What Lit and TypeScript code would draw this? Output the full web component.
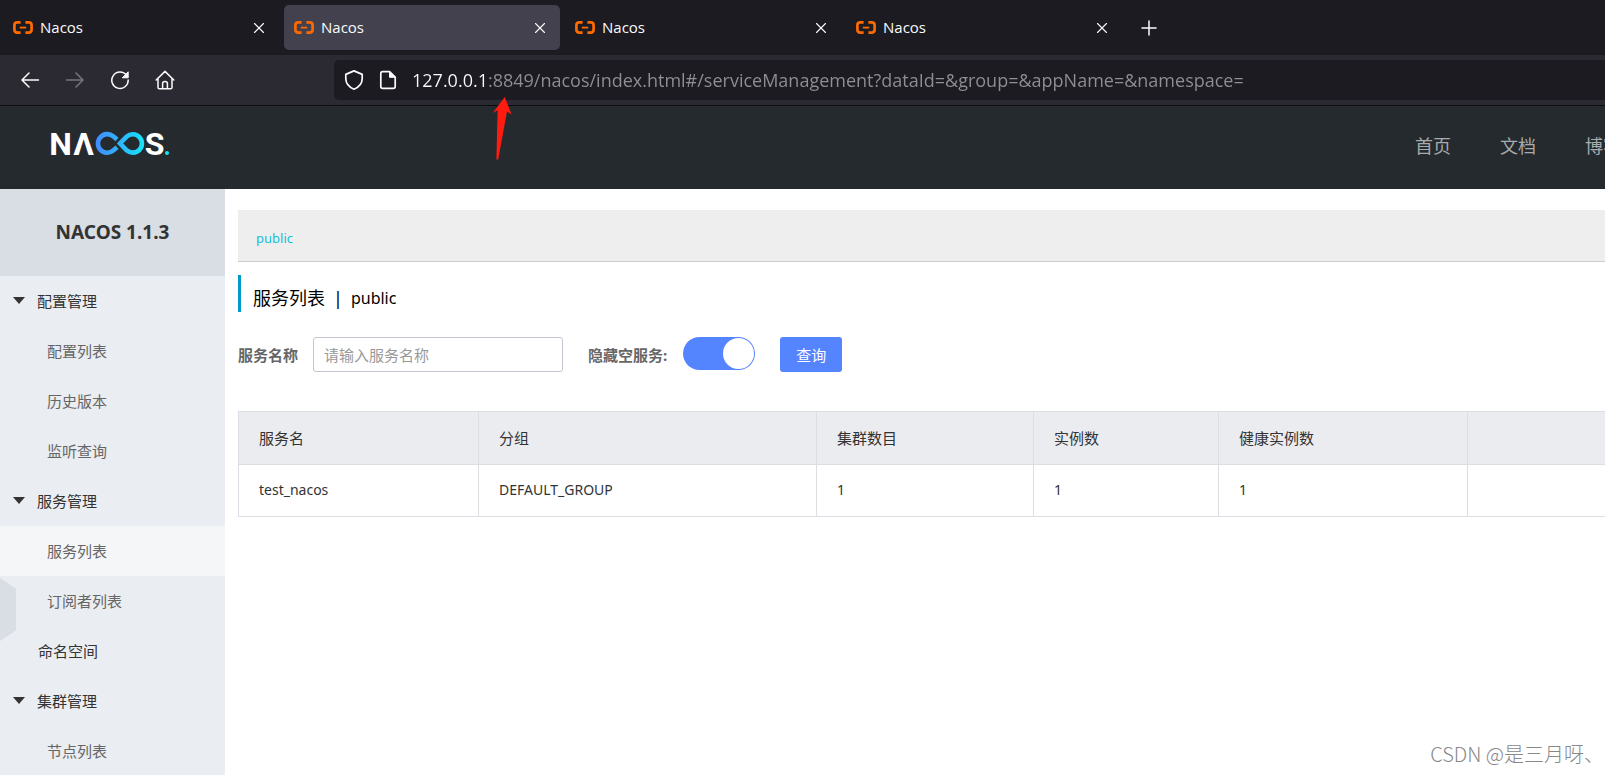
import { LitElement, html, css, svg } from "lit";
import { customElement, state } from "lit/decorators.js";

const favicon = html`<svg class="favicon" viewBox="0 0 20 13" width="20" height="13" aria-hidden="true">
  <g fill="none" stroke="#ff6a00" stroke-width="2.7">
    <path d="M7.6 1.4H4.4Q1.4 1.4 1.4 4.2V8.8Q1.4 11.6 4.4 11.6H7.6" />
    <path d="M12.4 1.4H15.6Q18.6 1.4 18.6 4.2V8.8Q18.6 11.6 15.6 11.6H12.4" />
    <path d="M6.8 6.6H13.2" stroke-width="1.8" />
  </g>
</svg>`;

const icon = (body: unknown, size = 20) => html`<svg
  class="icon" viewBox="0 0 20 20" width=${size} height=${size} aria-hidden="true"
  fill="none" stroke="currentColor" stroke-width="1.5" stroke-linecap="round" stroke-linejoin="round"
>${body}</svg>`;

const icons = {
  close: svg`<path d="M5.5 5.5l9 9M14.5 5.5l-9 9" stroke-width="1.1"/>`,
  plus: svg`<path d="M10 3v14M3 10h14"/>`,
  back: svg`<path d="M18.5 10H2M9 3L2 10l7 7"/>`,
  forward: svg`<path d="M1.5 10H18M11 3l7 7-7 7"/>`,
  reload: svg`<path d="M16.6 5.4A8.2 8.2 0 1 0 18.2 10"/><path d="M18.2 2.2v5.6h-5.6z" fill="currentColor" stroke-width="1"/>`,
  home: svg`<path d="M1.2 10L10 1.4 18.8 10M3 8.6V17.4Q3 18.8 4.4 18.8H15.6Q17 18.8 17 17.4V8.6M7.6 18.6V13.6Q7.6 11.6 10 11.6T12.4 13.6V18.6"/>`,
  shield: svg`<path d="M10 .9L18.2 4.4V8.5C18.2 13.2 15.2 17 10 19.2 4.8 17 1.8 13.2 1.8 8.5V4.4Z" stroke-width="1.7"/>`,
  page: svg`<path d="M11.5 1.6H4.6Q2.8 1.6 2.8 3.4V16.6Q2.8 18.4 4.6 18.4H15.4Q17.2 18.4 17.2 16.6V7.3Z" stroke-width="1.7"/><path d="M11.5 1.6V7.3H17.2Z" fill="currentColor" stroke-width="1"/>`,
};

@customElement("browser-chrome")
class BrowserChrome extends LitElement {
  static styles = css`
    :host { display: block; font-family: "Open Sans", "Noto Sans", sans-serif; color: #fbfbfe; border-bottom: 1px solid #0c0c0d; }
    button { border: 0; padding: 0; background: none; color: inherit; font: inherit; display: flex; align-items: center; }
    .tabs { display: flex; align-items: center; gap: 5px; height: 55px; padding: 0 3px; background: #1c1b22; }
    .tab { display: flex; align-items: center; flex: 0 1 276px; height: 45px; padding: 0 10px; border-radius: 5px; box-sizing: border-box; }
    .tab.current { background: #42414d; }
    .title { flex: 1; gap: 7px; font-size: 15px; line-height: 24px; }
    .title span { padding-bottom: 2px; }
    .new { margin-left: 12px; }
    .bar { display: flex; align-items: center; height: 50px; padding-left: 20px; background: #2b2a33; }
    .tools { display: flex; gap: 25px; width: 314px; flex: none; }
    .off { color: #76757d; }
    .address { flex: 1; display: flex; align-items: center; gap: 14px; height: 40px; padding-left: 10px; background: #1c1b22; border-radius: 5px 0 0 5px; }
    .url {
      flex: 1; min-width: 0; border: 0; outline: 0; padding: 0; font: 18px/36px "Open Sans", "Noto Sans", sans-serif;
      color: transparent; background: linear-gradient(90deg, #fbfbfe 75px, #8f8f96 75px); -webkit-background-clip: text; background-clip: text;
    }
  `;

  render() {
    return html`
      <div class="tabs">
        ${[0, 1, 2, 3].map(
          (i) => html`<div class="tab ${i === 1 ? "current" : ""}">
            <button class="title">${favicon}<span>Nacos</span></button>
            <button aria-label="Close tab">${icon(icons.close)}</button>
          </div>`,
        )}
        <button class="new" aria-label="New tab">${icon(icons.plus)}</button>
      </div>
      <div class="bar">
        <div class="tools">
          <button aria-label="Back">${icon(icons.back)}</button>
          <button class="off" aria-label="Forward">${icon(icons.forward)}</button>
          <button aria-label="Reload">${icon(icons.reload)}</button>
          <button aria-label="Home">${icon(icons.home)}</button>
        </div>
        <div class="address">
          ${icon(icons.shield)}${icon(icons.page)}
          <input class="url" aria-label="Address"
            value="127.0.0.1:8849/nacos/index.html#/serviceManagement?dataId=&amp;group=&amp;appName=&amp;namespace=" />
        </div>
      </div>
    `;
  }
}

@customElement("nacos-header")
class NacosHeader extends LitElement {
  static styles = css`
    :host { display: flex; align-items: center; justify-content: space-between; height: 83px; padding-left: 47px; background: #252a2f; overflow: hidden; }
    .logo { display: block; margin-top: -8px; }
    .letter { font: 700 32px Roboto, sans-serif; fill: #fff; text-anchor: middle; }
    .nav { display: flex; gap: 49px; margin-right: -16px; padding-bottom: 2px; }
    .nav a { color: #a8aaac; font-size: 18px; line-height: 27px; text-decoration: none; white-space: nowrap; }
  `;

  render() {
    return html`
      <svg class="logo" viewBox="-4 -12 124 48" width="124" height="48" role="img" aria-label="NACOS">
        <defs>
          <linearGradient id="wave" gradientUnits="userSpaceOnUse" x1="44" y1="0" x2="93" y2="0">
            <stop offset="0" stop-color="#4489ff" /><stop offset="1" stop-color="#16e3f8" />
          </linearGradient>
        </defs>
        <text class="letter" x="9.5" y="23">N</text>
        <text class="letter" x="32.5" y="23">Λ</text>
        <g fill="none" stroke="url(#wave)" stroke-width="4.6">
          <path d="M66 7.6L62.2 4.3A9.3 9.3 0 1 0 62.2 18.6L66 15.3" />
          <path d="M69 11.4L75.6 4.6A9.2 9.2 0 1 1 75.6 18.3Z" />
        </g>
        <text class="letter" x="103.5" y="23">S</text>
        <circle cx="116" cy="21" r="2" fill="#16e3f8" />
      </svg>
      <nav class="nav"><a href="#home">首页</a><a href="#docs">文档</a><a href="#blog">博客</a></nav>
    `;
  }
}

type Entry = { label: string; kind: "group" | "leaf" | "sub"; current?: boolean };

@customElement("nacos-menu")
class NacosMenu extends LitElement {
  static styles = css`
    :host { display: block; position: relative; width: 225px; flex: none; background: #eaedf1; overflow: hidden; }
    .version { margin: 0; height: 87px; background: #d9dde4; color: #333; font: 700 19px/87px "Noto Sans", sans-serif; text-align: center; }
    .entry { display: flex; align-items: center; height: 50px; padding-left: 38px; color: #333; font-size: 15px; text-decoration: none; }
    .entry span { padding-bottom: 2px; }
    .group { padding-left: 13px; gap: 12px; }
    .group svg { margin-bottom: 2px; }
    .sub { padding-left: 47px; color: #666; }
    .current { background: #f4f6f8; }
    .handle { position: absolute; left: 0; top: 389px; width: 16px; height: 63px; padding: 0; border: 0; background: #d9dde4; clip-path: polygon(0 0, 100% 17%, 100% 83%, 0 100%); }
  `;

  entries: Entry[] = [
    { label: "配置管理", kind: "group" },
    { label: "配置列表", kind: "sub" },
    { label: "历史版本", kind: "sub" },
    { label: "监听查询", kind: "sub" },
    { label: "服务管理", kind: "group" },
    { label: "服务列表", kind: "sub", current: true },
    { label: "订阅者列表", kind: "sub" },
    { label: "命名空间", kind: "leaf" },
    { label: "集群管理", kind: "group" },
    { label: "节点列表", kind: "sub" },
  ];

  render() {
    return html`
      <h1 class="version">NACOS 1.1.3</h1>
      <nav>
        ${this.entries.map(
          (e) => html`<a href="#menu" class="entry ${e.kind} ${e.current ? "current" : ""}">
            ${e.kind === "group"
              ? html`<svg width="12" height="7" viewBox="0 0 12 7" aria-hidden="true"><path d="M0 0H12L6 7Z" fill="#333" /></svg>`
              : ""}<span>${e.label}</span>
          </a>`,
        )}
      </nav>
      <button class="handle" aria-label="Collapse menu"></button>
    `;
  }
}

@customElement("service-list")
class ServiceList extends LitElement {
  static styles = css`
    :host { display: block; flex: 1; min-width: 0; padding: 21px 0 0 13px; background: #fff; color: #333; font-size: 15px; }
    .spaces { display: flex; align-items: center; height: 52px; padding: 4px 18px 0; background: #eee; border-bottom: 1px solid #ccc; box-sizing: border-box; }
    .spaces a { color: #15bfdc; font-size: 13px; text-decoration: none; }
    .heading { display: flex; align-items: center; gap: 8px; height: 27px; margin: 13px 0 0; padding: 10px 0 0 12px; border-left: 3px solid #09c; font-size: 18px; font-weight: 400; line-height: 27px; color: #000; }
    .space { font-size: 16px; }
    .query { display: flex; align-items: center; height: 35px; margin: 25px 0 39px; }
    .query label { color: #666; font-weight: 700; }
    .text { width: 250px; height: 35px; box-sizing: border-box; margin: 0 25px 0 15px; padding: 0 10px; border: 1px solid #c4c6cf; border-radius: 3px; font: inherit; outline: 0; }
    .text::placeholder { color: #999; }
    .switch { appearance: none; display: flex; justify-content: flex-end; width: 72px; height: 33px; margin: 0 25px 2px 16px; padding: 1px; border-radius: 17px; background: #5584ff; box-sizing: border-box; }
    .switch::before { content: ""; width: 31px; height: 31px; border-radius: 50%; background: #fff; }
    .switch:not(:checked) { justify-content: flex-start; background: #c4c6cf; }
    .search { height: 35px; padding: 0 16px; border: 0; border-radius: 3px; background: #5584ff; color: #fff; font: inherit; }
    table { width: 100%; table-layout: fixed; border-collapse: collapse; }
    th, td { height: 52px; box-sizing: border-box; padding: 0 20px 2px; border: 1px solid #dcdee3; text-align: left; font-weight: 400; font-size: 15px; }
    th { height: 53px; background: #ebecf0; }
    td { font-size: 14px; }
    th:last-child, td:last-child { border-right: 0; }
    .c1 { width: 240px; } .c2 { width: 338px; } .c3 { width: 217px; } .c4 { width: 185px; } .c5 { width: 249px; }
  `;

  @state() rows = [["test_nacos", "DEFAULT_GROUP", "1", "1", "1", ""]];

  render() {
    return html`
      <div class="spaces"><a href="#public">public</a></div>
      <h2 class="heading"><span>服务列表</span><span>|</span><span class="space">public</span></h2>
      <form class="query" @submit=${(e: Event) => e.preventDefault()}>
        <label for="name">服务名称</label>
        <input id="name" class="text" type="text" placeholder="请输入服务名称" />
        <label for="hide">隐藏空服务:</label>
        <input id="hide" class="switch" type="checkbox" role="switch" checked />
        <button class="search">查询</button>
      </form>
      <table>
        <colgroup><col class="c1" /><col class="c2" /><col class="c3" /><col class="c4" /><col class="c5" /><col /></colgroup>
        <thead>
          <tr>${["服务名", "分组", "集群数目", "实例数", "健康实例数", ""].map((t) => html`<th>${t}</th>`)}</tr>
        </thead>
        <tbody>
          ${this.rows.map((r) => html`<tr>${r.map((t) => html`<td>${t}</td>`)}</tr>`)}
        </tbody>
      </table>
    `;
  }
}

@customElement("app-root")
class AppRoot extends LitElement {
  static styles = css`
    :host { display: flex; flex-direction: column; position: relative; height: 100vh; overflow: hidden; font-family: "Noto Sans", "Noto Sans CJK SC", sans-serif; }
    .body { flex: 1; display: flex; min-height: 0; }
    .arrow { position: absolute; left: 492px; top: 97px; }
    .mark { position: absolute; right: 1px; bottom: 7px; font-size: 20px; line-height: 28px; font-family: "Noto Sans CJK SC", sans-serif; font-weight: 300; color: #888; text-shadow: -1px -1px 0 #fff; }
  `;

  render() {
    return html`
      <browser-chrome></browser-chrome>
      <nacos-header></nacos-header>
      <div class="body">
        <nacos-menu></nacos-menu>
        <service-list></service-list>
      </div>
      <svg class="arrow" width="20" height="63" viewBox="0 0 20 63" aria-hidden="true">
        <path d="M12.7 0L19.6 17.4 15 14.5 6.2 62.5H4.4L5.6 13.2.8 16Z" fill="#ff1b10" />
      </svg>
      <div class="mark">CSDN @是三月呀、</div>
    `;
  }
}
